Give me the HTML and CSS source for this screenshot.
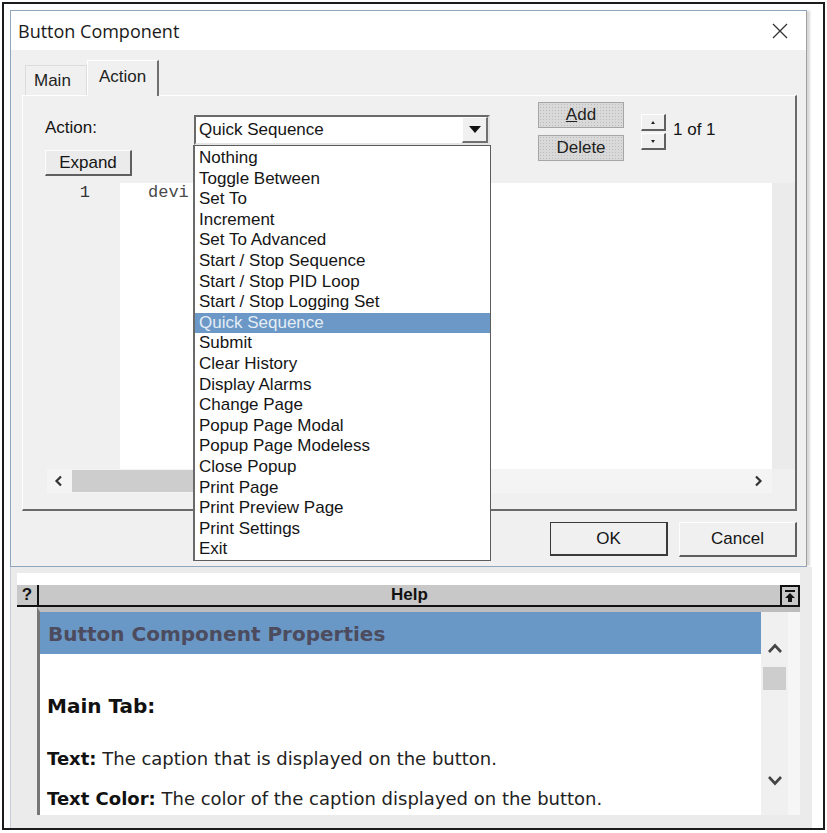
FILE: index.html
```html
<!DOCTYPE html>
<html>
<head>
<meta charset="utf-8">
<link rel="stylesheet" href="styles.css">
</head>
<body>
<div class="frame">
  <div class="dialog">
    <div class="titlebar">
      <span class="title">Button Component</span>
      <svg class="close" width="16" height="16" viewBox="0 0 16 16"><path d="M1 1L15 15M15 1L1 15" stroke="#333" stroke-width="1.3" fill="none"/></svg>
    </div>
    <div class="dlg-body">
      <div class="tabs">
        <div class="tab">Main</div>
        <div class="tab active">Action</div>
      </div>
      <div class="panel">
        <div class="toprow">
          <div class="col1">
            <div class="lbl">Action:</div>
            <div class="btn raised expand">Expand</div>
          </div>
          <div class="combo">
            <span class="combo-text">Quick Sequence</span>
            <span class="combo-btn"><span class="tri-down"></span></span>
          </div>
          <div class="addcol">
            <div class="flatbtn"><span class="ul">A</span>dd</div>
            <div class="flatbtn">Delete</div>
          </div>
          <div class="spin">
            <div class="spin-btn"><span class="tiny-up"></span></div>
            <div class="spin-btn"><span class="tiny-down"></span></div>
          </div>
          <div class="count">1 of 1</div>
        </div>
        <div class="editor">
          <div class="gutter">1</div>
          <div class="code">devi</div>
          <div class="vgap"></div>
        </div>
        <div class="hscroll">
          <svg class="chev-l" width="9" height="12" viewBox="0 0 9 12"><path d="M7 1.5L2.5 6L7 10.5" stroke="#333" stroke-width="2.2" fill="none"/></svg>
          <div class="hthumb"></div>
          <svg class="chev-r" width="9" height="12" viewBox="0 0 9 12"><path d="M2 1.5L6.5 6L2 10.5" stroke="#333" stroke-width="2.2" fill="none"/></svg>
        </div>
      </div>
      <div class="footer">
        <div class="btn okbtn">OK</div>
        <div class="btn raised cancelbtn">Cancel</div>
      </div>
    </div>
    <ul class="droplist">
      <li>Nothing</li>
      <li>Toggle Between</li>
      <li>Set To</li>
      <li>Increment</li>
      <li>Set To Advanced</li>
      <li>Start / Stop Sequence</li>
      <li>Start / Stop PID Loop</li>
      <li>Start / Stop Logging Set</li>
      <li class="sel">Quick Sequence</li>
      <li>Submit</li>
      <li>Clear History</li>
      <li>Display Alarms</li>
      <li>Change Page</li>
      <li>Popup Page Modal</li>
      <li>Popup Page Modeless</li>
      <li>Close Popup</li>
      <li>Print Page</li>
      <li>Print Preview Page</li>
      <li>Print Settings</li>
      <li>Exit</li>
    </ul>
  </div>
  <div class="help">
    <div class="help-top"></div>
    <div class="help-head">
      <div class="q">?</div>
      <div class="htitle">Help</div>
      <div class="hicon"><svg width="14" height="14" viewBox="0 0 14 14"><rect x="2" y="1" width="10" height="2" fill="#111"/><path d="M7 4L2 9H5V13H9V9H12Z" fill="#111"/></svg></div>
    </div>
    <div class="help-content">
      <div class="hc-main">
        <div class="hc-title">Button Component Properties</div>
        <div class="hc-h">Main Tab:</div>
        <div class="hc-p p1"><b>Text:</b> The caption that is displayed on the button.</div>
        <div class="hc-p p2"><b>Text Color:</b> The color of the caption displayed on the button.</div>
      </div>
      <div class="vscroll">
        <svg class="vchev" width="16" height="12" viewBox="0 0 16 12"><path d="M2 10L8 3.5L14 10" stroke="#444" stroke-width="2.6" fill="none"/></svg>
        <div class="vthumb"></div>
        <svg class="vchev down" width="16" height="12" viewBox="0 0 16 12"><path d="M2 2L8 8.5L14 2" stroke="#444" stroke-width="2.6" fill="none"/></svg>
      </div>
      <div class="hc-pad"></div>
    </div>
  </div>
</div>
</body>
</html>
```

FILE: styles.css
```css
* { box-sizing: border-box; }
html, body { margin: 0; padding: 0; }
body {
  width: 827px;
  height: 833px;
  overflow: hidden;
  background: #fff;
  font-family: "Liberation Sans", Arial, sans-serif;
  font-size: 17px;
  color: #151515;
}

.frame {
  margin: 2px 0 0 2px;
  width: 823px;
  height: 828px;
  border: 2px solid #1c1c1c;
  padding: 6px 0 0 6px;
  background: #fff;
}

/* ---------- dialog ---------- */
.dialog {
  position: relative;
  width: 797px;
  height: 557px;
  border: 1px solid #8fa6c1;
  border-right-color: #a0a0a0;
  background: #f0f0f0;
  box-shadow: 4px 0 2px -1px #d8d8d8;
}
.titlebar {
  height: 39px;
  background: #fff;
  display: flex;
  align-items: center;
  justify-content: space-between;
  padding: 0 18px 0 7px;
}
.title {
  font-family: "Open Sans", "Liberation Sans", sans-serif;
  font-size: 18px;
  color: #1a1a1a;
}
.close { display: block; }

.dlg-body { padding: 10px 9px 10px 11px; }

.tabs {
  display: flex;
  align-items: flex-end;
  height: 35px;
}
.tab {
  height: 30px;
  line-height: 30px;
  width: 62px;
  margin-left: 3px;
  padding-left: 8px;
  border: 1px solid #dcdcdc;
  border-bottom: none;
  color: #222;
}
.tab.active {
  position: relative;
  z-index: 2;
  margin-left: 0;
  width: 72px;
  height: 36px;
  line-height: 32px;
  padding-left: 11px;
  margin-bottom: -1px;
  background: #f0f0f0;
  border-top: 1px solid #fff;
  border-left: 1px solid #fff;
  border-right: 2px solid #707070;
}

.panel {
  width: 775px;
  height: 416px;
  border-style: solid;
  border-width: 1px 2px 2px 1px;
  border-color: #fff #6a6a6a #6a6a6a #fff;
}

.toprow {
  display: flex;
  align-items: flex-start;
  height: 87px;
}
.col1 { margin-left: 22px; width: 87px; }
.lbl { margin-top: 22px; line-height: 20px; }
.btn {
  display: flex;
  align-items: center;
  justify-content: center;
  background: #f0f0f0;
}
.raised {
  border-style: solid;
  border-width: 1px 2px 2px 1px;
  border-color: #fdfdfd #5f5f5f #5f5f5f #fdfdfd;
}
.expand {
  margin-top: 12px;
  width: 87px;
  height: 26px;
  background: #ebebeb;
}

.combo {
  margin-left: 62px;
  margin-top: 19px;
  width: 296px;
  height: 30px;
  border: 2px solid;
  border-color: #6a6a6a #e4e4e4 #e4e4e4 #6a6a6a;
  background: #fff;
  display: flex;
  align-items: center;
  padding-left: 3px;
}
.combo-text { flex: 1; }
.combo-btn {
  width: 26px;
  height: 26px;
  background: #f0f0f0;
  border-style: solid;
  border-width: 1px 2px 2px 1px;
  border-color: #fff #707070 #707070 #fff;
  display: flex;
  align-items: center;
  justify-content: center;
}
.tri-down {
  width: 0;
  height: 0;
  border-left: 6px solid transparent;
  border-right: 6px solid transparent;
  border-top: 7px solid #111;
}

.addcol {
  margin-left: 48px;
  margin-top: 6px;
  display: flex;
  flex-direction: column;
  gap: 7px;
}
.flatbtn {
  width: 86px;
  height: 26px;
  border: 1px solid #a6a6a6;
  background-color: #d9d9d9;
  background-image: radial-gradient(#bcbcbc 0.7px, transparent 0.8px);
  background-size: 3px 3px;
  display: flex;
  align-items: center;
  justify-content: center;
  color: #222;
}
.ul { text-decoration: underline; }

.spin {
  margin-left: 17px;
  margin-top: 18px;
  display: flex;
  flex-direction: column;
  gap: 2px;
}
.spin-btn {
  width: 25px;
  height: 17px;
  border-style: solid;
  border-width: 1px 2px 2px 1px;
  border-color: #fff #606060 #606060 #fff;
  display: flex;
  align-items: center;
  justify-content: center;
}
.tiny-up {
  width: 0; height: 0;
  border-left: 2px solid transparent;
  border-right: 2px solid transparent;
  border-bottom: 3px solid #222;
}
.tiny-down {
  width: 0; height: 0;
  border-left: 2px solid transparent;
  border-right: 2px solid transparent;
  border-top: 3px solid #222;
}
.count {
  margin-left: 7px;
  margin-top: 24px;
  line-height: 20px;
}

.editor {
  display: flex;
  height: 286px;
}
.gutter {
  width: 97px;
  padding-right: 30px;
  text-align: right;
  font-family: "Liberation Mono", "Courier New", monospace;
  font-size: 17px;
  line-height: 20px;
  color: #333;
}
.code {
  width: 652px;
  background: #fff;
  padding-left: 28px;
  font-family: "Liberation Mono", "Courier New", monospace;
  font-size: 17px;
  line-height: 20px;
  color: #4a4a4a;
}
.vgap { flex: 1; background: #ebebeb; }

.hscroll {
  margin-left: 24px;
  width: 725px;
  height: 24px;
  background: #f4f4f4;
  display: flex;
  align-items: center;
}
.chev-l { margin-left: 7px; }
.hthumb {
  margin-left: 9px;
  width: 260px;
  height: 22px;
  background: #cdcdcd;
}
.chev-r { margin-left: auto; margin-right: 9px; }

.footer {
  display: flex;
  justify-content: flex-end;
  gap: 11px;
  margin-top: 11px;
}
.okbtn {
  width: 118px;
  height: 34px;
  border: 1px solid #3a3a3a;
  border-right-width: 2px;
  border-bottom-width: 2px;
}
.cancelbtn {
  width: 118px;
  height: 35px;
}

.droplist {
  position: absolute;
  left: 182px;
  top: 134px;
  width: 298px;
  height: 416px;
  margin: 0;
  padding: 2px 0 0 0;
  list-style: none;
  background: #fff;
  border: 1px solid #5c5c5c;
  border-left: 2px solid #6a6a6a;
  z-index: 5;
}
.droplist li {
  height: 20.6px;
  line-height: 20.6px;
  padding-left: 4px;
  color: #151515;
  white-space: nowrap;
}
.droplist li.sel {
  background: #6b98c7;
  color: #e4ecf4;
}

/* ---------- help ---------- */
.help {
  width: 802px;
  height: 261px;
  background: #ebebeb;
  border-left: 1px solid #c4ccd6;
  padding: 6px 12px 13px 6px;
}
.help-top { height: 12px; background: #fff; }
.help-head {
  height: 22px;
  background: #c8c8c8;
  border-bottom: 2px solid #111;
  display: flex;
  align-items: stretch;
  font-weight: bold;
  font-size: 17px;
  color: #111;
}
.q {
  width: 22px;
  border-right: 2px solid #111;
  text-align: center;
  line-height: 20px;
}
.htitle {
  flex: 1;
  text-align: center;
  line-height: 20px;
}
.hicon {
  width: 20px;
  border: 2px solid #111;
  border-bottom: none;
  display: flex;
  align-items: center;
  justify-content: center;
}
.hicon svg { display: block; }

.help-content {
  margin-left: 20px;
  height: 208px;
  display: flex;
  border-left: 3px solid #767676;
  border-top: 5px solid #bdbdbd;
  background: #fff;
}
.hc-main {
  width: 721px;
  overflow: hidden;
  font-family: "DejaVu Sans", Verdana, sans-serif;
}
.hc-title {
  height: 42px;
  background: #6a98c6;
  padding-left: 8px;
  line-height: 44px;
  font-size: 20px;
  font-weight: bold;
  color: #4c4c5e;
}
.hc-h {
  margin-top: 40px;
  padding-left: 7px;
  line-height: 24px;
  font-size: 20px;
  font-weight: bold;
  color: #111;
}
.hc-p {
  padding-left: 7px;
  line-height: 22px;
  font-size: 18px;
  color: #222;
  white-space: nowrap;
}
.hc-p b { color: #111; }
.p1 { margin-top: 30px; }
.p2 { margin-top: 18px; }

.vscroll {
  width: 27px;
  background: #f0f0f0;
  display: flex;
  flex-direction: column;
  align-items: center;
  padding-top: 30px;
}
.vchev { display: block; }
.vthumb {
  margin-top: 13px;
  width: 23px;
  height: 23px;
  background: #cdcdcd;
}
.vchev.down { margin-top: 85px; }
.hc-pad { flex: 1; background: #f6f6f6; }
```
